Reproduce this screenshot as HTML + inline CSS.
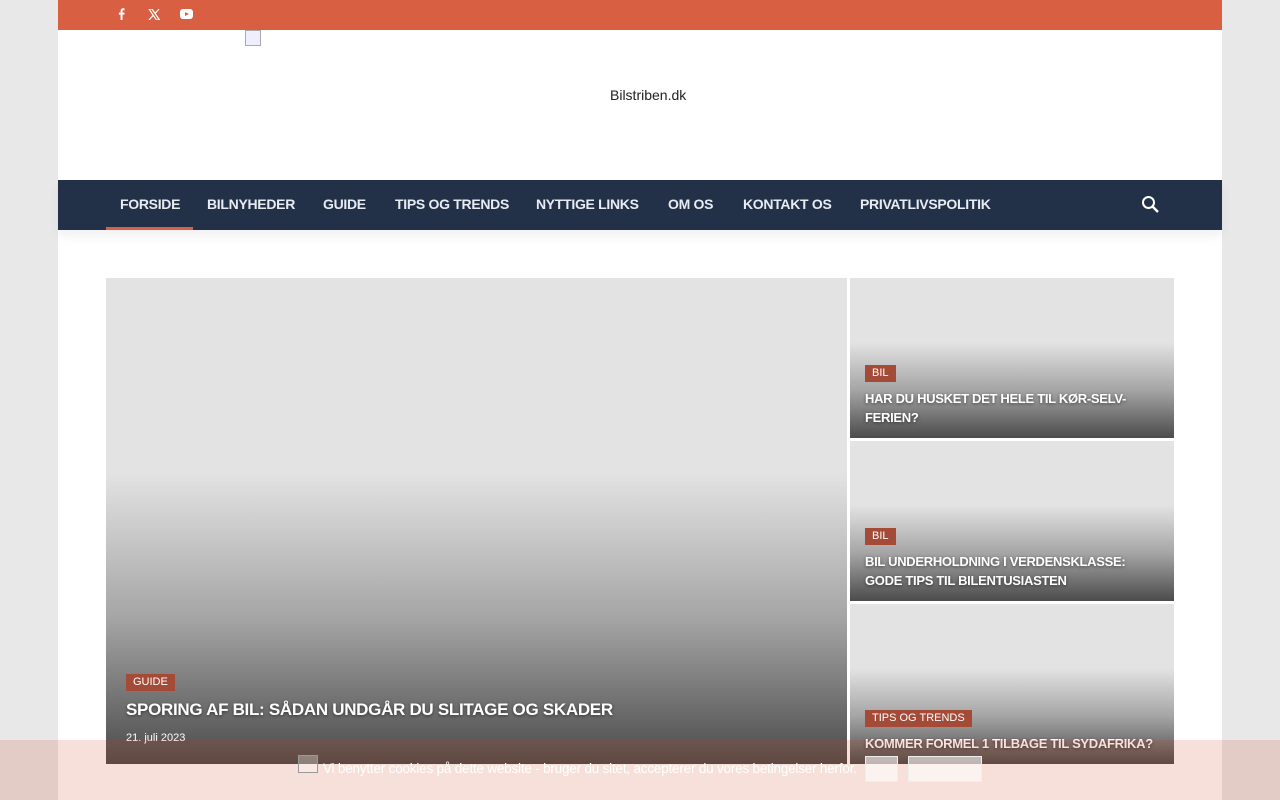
<!DOCTYPE html>
<html><head><meta charset="utf-8"><style>
*{margin:0;padding:0;box-sizing:border-box}
body{width:1280px;height:800px;background:#e8e8e8;font-family:"Liberation Sans",sans-serif;position:relative;overflow:hidden}
.wrap{position:absolute;left:58px;top:0;width:1164px;height:800px;background:#fff}
.top{height:30px;background:#d95f43;position:relative}
.top svg{position:absolute;top:8px}
.hdr{height:150px;position:relative}
.logo{position:absolute;left:552px;top:57px;font-size:14px;color:#222}
.broken{position:absolute;left:187px;top:0;width:16px;height:16px;border:1px solid #aaa;background:#eef}
.nav{height:50px;background:#233148;position:relative;box-shadow:0 6px 10px rgba(0,0,0,.06)}
.nav a{position:absolute;top:0;height:50px;line-height:49px;color:#e8ecf2;font-weight:bold;font-size:14px;text-decoration:none;letter-spacing:-.3px}
.nav .act{border-bottom:3px solid #d95f43;line-height:49px;height:50px}
.card{position:absolute;background:linear-gradient(to bottom,#e3e3e3 0%,#e3e3e3 40%,#a5a5a5 70%,#4b4b4b 100%);overflow:hidden}
.tag{position:absolute;background:#a44b38;color:#fff;font-size:11px;padding:1px 7px;height:17px;line-height:15px}
.ttl{position:absolute;color:#fff;font-weight:bold;text-shadow:0 1px 3px rgba(0,0,0,.5);letter-spacing:-.3px}
.cookie{position:absolute;left:0;top:740px;width:1280px;height:60px;background:rgba(200,60,20,.16)}
.cookie span{position:absolute;left:323px;top:21px;color:#fff;font-size:13.5px;letter-spacing:-.2px}
.btn{position:absolute;top:16px;height:26px;border:1px solid #eee;background:rgba(255,255,255,.6)}
</style></head><body>
<div class="wrap">
 <div class="top">
  <svg style="left:60px" width="7" height="12" viewBox="0 0 7 12"><path d="M4.5 12V6.6h1.8l.3-2H4.5V3.3c0-.6.2-1 1-1h1.1V.5C6.4.4 5.8.3 5.1.3 3.6.3 2.6 1.2 2.6 2.9v1.7H.9v2h1.7V12z" fill="#fff"/></svg>
  <svg style="left:90px;top:9px" width="12" height="11" viewBox="0 0 12 11"><path d="M1 0h3l7.5 11h-3z M1 11l4.3-4.8 M11 0L6.8 4.7" stroke="#fff" stroke-width="1.2" fill="none"/></svg>
  <svg style="left:122px;top:9px" width="13" height="10" viewBox="0 0 13 10"><rect width="13" height="10" rx="3" fill="#fff"/><path d="M5 3l4 2-4 2z" fill="#d95f43"/></svg>
 </div>
 <div class="hdr"><div class="broken"></div><div class="logo">Bilstriben.dk</div></div>
 <div class="nav">
  <a class="act" style="left:48px;width:87px;padding-left:14px">FORSIDE</a>
  <a style="left:149px">BILNYHEDER</a>
  <a style="left:265px">GUIDE</a>
  <a style="left:337px">TIPS OG TRENDS</a>
  <a style="left:478px">NYTTIGE LINKS</a>
  <a style="left:610px">OM OS</a>
  <a style="left:685px">KONTAKT OS</a>
  <a style="left:802px">PRIVATLIVSPOLITIK</a>
  <svg style="position:absolute;left:1083px;top:15px" width="20" height="20" viewBox="0 0 20 20"><circle cx="7.5" cy="7.5" r="5.5" stroke="#fff" stroke-width="2" fill="none"/><path d="M11.5 11.5L17 17" stroke="#fff" stroke-width="2.4"/></svg>
 </div>
 <div class="card" style="left:48px;top:278px;width:741px;height:486px">
  <div class="tag" style="left:20px;top:396px">GUIDE</div>
  <div class="ttl" style="left:20px;top:422px;font-size:17px">SPORING AF BIL: SÅDAN UNDGÅR DU SLITAGE OG SKADER</div>
  <div style="position:absolute;left:20px;top:454px;color:#fff;font-size:11px">21. juli 2023</div>
 </div>
 <div class="card" style="left:792px;top:278px;width:324px;height:160px">
  <div class="tag" style="left:15px;top:87px">BIL</div>
  <div class="ttl" style="left:15px;top:111px;font-size:13px;line-height:19px;width:290px">HAR DU HUSKET DET HELE TIL KØR-SELV-FERIEN?</div>
 </div>
 <div class="card" style="left:792px;top:441px;width:324px;height:160px">
  <div class="tag" style="left:15px;top:87px">BIL</div>
  <div class="ttl" style="left:15px;top:111px;font-size:13px;line-height:19px;width:300px">BIL UNDERHOLDNING I VERDENSKLASSE: GODE TIPS TIL BILENTUSIASTEN</div>
 </div>
 <div class="card" style="left:792px;top:604px;width:324px;height:160px">
  <div class="tag" style="left:15px;top:106px">TIPS OG TRENDS</div>
  <div class="ttl" style="left:15px;top:130px;font-size:13px;line-height:19px;width:300px">KOMMER FORMEL 1 TILBAGE TIL SYDAFRIKA?</div>
 </div>
</div>
<div class="cookie">
 <div style="position:absolute;left:298px;top:15px;width:20px;height:18px;border:1px solid #999;background:rgba(255,255,255,.3)"></div>
 <span>Vi benytter cookies på dette website - bruger du sitet, accepterer du vores betingelser herfor.</span>
 <div class="btn" style="left:865px;width:33px"></div>
 <div class="btn" style="left:908px;width:74px"></div>
</div>
</body></html>
